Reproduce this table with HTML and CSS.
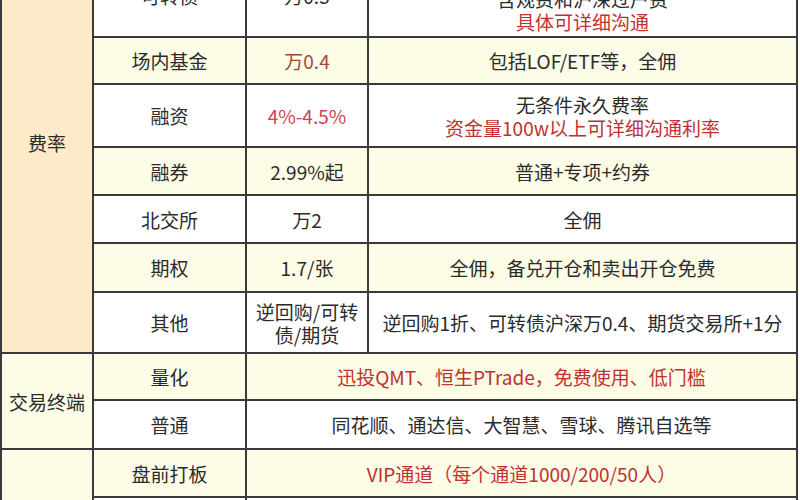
FILE: index.html
```html
<!DOCTYPE html>
<html lang="zh-CN">
<head>
<meta charset="utf-8">
<title>费率表</title>
<link rel="stylesheet" href="styles.css">
</head>
<body>
<div class="sheet">
<table class="fees">
  <colgroup>
    <col class="c1"><col class="c2"><col class="c3"><col class="c4">
  </colgroup>
  <tbody>
    <tr class="r-top">
      <td class="cat peach cat-fee" rowspan="7">费率</td>
      <td>可转债</td>
      <td>万0.5</td>
      <td class="top-note">沪深两市统一费率<br>含规费和沪深过户费<br><span class="red">具体可详细沟通</span></td>
    </tr>
    <tr class="h47 alt">
      <td>场内基金</td>
      <td class="brown">万0.4</td>
      <td>包括LOF/ETF等，全佣</td>
    </tr>
    <tr class="h63">
      <td>融资</td>
      <td class="pink">4%-4.5%</td>
      <td>无条件永久费率<br><span class="red">资金量100w以上可详细沟通利率</span></td>
    </tr>
    <tr class="h48 alt">
      <td>融券</td>
      <td>2.99%起</td>
      <td>普通+专项+约券</td>
    </tr>
    <tr class="h48">
      <td>北交所</td>
      <td>万2</td>
      <td>全佣</td>
    </tr>
    <tr class="h49 alt">
      <td>期权</td>
      <td>1.7/张</td>
      <td>全佣，备兑开仓和卖出开仓免费</td>
    </tr>
    <tr class="h61">
      <td>其他</td>
      <td>逆回购/可转<br>债/期货</td>
      <td>逆回购1折、可转债沪深万0.4、期货交易所+1分</td>
    </tr>
    <tr class="h47 alt">
      <td class="cat plain" rowspan="2">交易终端</td>
      <td>量化</td>
      <td colspan="2" class="red">迅投QMT、恒生PTrade，免费使用、低门槛</td>
    </tr>
    <tr class="h49">
      <td>普通</td>
      <td colspan="2">同花顺、通达信、大智慧、雪球、腾讯自选等</td>
    </tr>
    <tr class="h48 alt">
      <td class="cat peach" rowspan="3">打板服务</td>
      <td>盘前打板</td>
      <td colspan="2" class="red">VIP通道（每个通道1000/200/50人）</td>
    </tr>
    <tr class="h48">
      <td>盘中打板</td>
      <td colspan="2">极速通道</td>
    </tr>
    <tr class="h48 alt">
      <td>其他服务</td>
      <td colspan="2">专属客户经理</td>
    </tr>
  </tbody>
</table>
</div>
</body>
</html>
```

FILE: styles.css
```css
html, body {
  margin: 0;
  padding: 0;
  background: #ffffff;
}
body {
  width: 800px;
  height: 500px;
  overflow: hidden;
}
.sheet {
  width: 800px;
  height: 500px;
  overflow: hidden;
}
.fees {
  border-collapse: collapse;
  table-layout: fixed;
  width: 798px;
  margin-top: -47px;
  font-family: "Noto Sans CJK SC", "Noto Sans", sans-serif;
  font-size: 19px;
  line-height: 23px;
  color: #2b2b2b;
}
.c1 { width: 92px; }
.c2 { width: 153px; }
.c3 { width: 122px; }
.c4 { width: 429px; }
.fees td {
  border: 2px solid #3a3a3a;
  text-align: center;
  vertical-align: middle;
  padding: 0 4px;
  background: #ffffff;
}
.fees tr.alt td { background: #fdfce6; }
.fees td.peach { background: #fdeac8; }
.fees td.plain { background: #ffffff; }
.cat-fee { padding-bottom: 23px !important; }
.r-top { height: 83px; }
.top-note { padding-top: 6px !important; }
.h47 { height: 47px; }
.h48 { height: 48px; }
.h49 { height: 49px; }
.h61 { height: 61px; }
.h63 { height: 63px; }
.red { color: #c0312f; }
.pink { color: #cf3f55; }
.brown { color: #9c4a3c; }
```
